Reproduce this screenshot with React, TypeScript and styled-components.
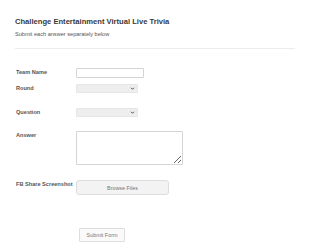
import React from 'react';
import styled, { createGlobalStyle } from 'styled-components';

const GlobalStyle = createGlobalStyle`
	html, body {
		margin: 0;
		padding: 0;
		background: #ffffff;
	}
	body {
		font-family: 'Liberation Sans', Arial, sans-serif;
		color: #333333;
	}
`;

export default function App() {
	return (
		<>
			<GlobalStyle />
			<Page>
				<Header>
					<Title>Challenge Entertainment Virtual Live Trivia</Title>
					<Subtitle>Submit each answer separately below</Subtitle>
				</Header>
				<Form onSubmit={(e) => e.preventDefault()}>
					<Row $top={19}>
						<Label>Team Name</Label>
						<TextInput type="text" />
					</Row>
					<Row $top={6}>
						<Label>Round</Label>
						<SelectWrap>
							<Select defaultValue="">
								<option value="" />
							</Select>
							<Chevron viewBox="0 0 10 10">
								<path d="M2 3.5 L5 6.5 L8 3.5" fill="none" stroke="#444" strokeWidth="1.8" />
							</Chevron>
						</SelectWrap>
					</Row>
					<Row $top={15}>
						<Label>Question</Label>
						<SelectWrap>
							<Select defaultValue="">
								<option value="" />
							</Select>
							<Chevron viewBox="0 0 10 10">
								<path d="M2 3.5 L5 6.5 L8 3.5" fill="none" stroke="#444" strokeWidth="1.8" />
							</Chevron>
						</SelectWrap>
					</Row>
					<Row $top={14}>
						<Label>Answer</Label>
						<TextArea />
					</Row>
					<Row $top={15}>
						<Label>FB Share Screenshot</Label>
						<BrowseButton type="button">Browse Files</BrowseButton>
					</Row>
					<SubmitRow>
						<SubmitButton type="submit">Submit Form</SubmitButton>
					</SubmitRow>
				</Form>
			</Page>
		</>
	);
}

const Page = styled.div`
	padding: 17px 15px 0 15px;
	width: 280px;
`;

const Header = styled.div`
	padding-bottom: 10px;
	border-bottom: 1px solid #ececec;
`;

const Title = styled.h1`
	margin: 0;
	font-size: 7.6px;
	line-height: 10px;
	font-weight: bold;
	color: #3a3a3a;
`;

const Subtitle = styled.p`
	margin: 3px 0 0 0;
	font-size: 5.6px;
	line-height: 8px;
	color: #555555;
`;

const Form = styled.form`
	display: flex;
	flex-direction: column;
	padding-left: 1px;
`;

const Row = styled.div<{ $top: number }>`
	display: flex;
	align-items: flex-start;
	margin-top: ${({ $top }) => $top}px;
`;

const Label = styled.label`
	width: 60px;
	flex-shrink: 0;
	padding-top: 1px;
	font-size: 5.6px;
	line-height: 7px;
	font-weight: bold;
	color: #555555;
	white-space: nowrap;
`;

const TextInput = styled.input`
	box-sizing: border-box;
	width: 68px;
	height: 10px;
	margin: 0;
	padding: 0 2px;
	border: 1px solid #d4d4d4;
	border-radius: 1px;
	background: #ffffff;
	outline: none;
	font-size: 6px;
`;

const SelectWrap = styled.div`
	position: relative;
	width: 62px;
	height: 9px;
	font-size: 0;
	line-height: 0;
`;

const Select = styled.select`
	display: block;
	box-sizing: border-box;
	width: 100%;
	height: 100%;
	margin: 0;
	padding: 0;
	border: 1px solid #e6e6e6;
	border-radius: 1px;
	background: #eeeeee;
	appearance: none;
	outline: none;
	font-size: 5px;
`;

const Chevron = styled.svg`
	position: absolute;
	right: 3px;
	top: 2px;
	width: 5px;
	height: 5px;
	pointer-events: none;
`;

const TextArea = styled.textarea`
	box-sizing: border-box;
	width: 107px;
	height: 34px;
	margin: 0;
	padding: 2px;
	border: 1px solid #d4d4d4;
	border-radius: 1px;
	outline: none;
	font-size: 6px;
	font-family: 'Liberation Sans', Arial, sans-serif;
`;

const BrowseButton = styled.button`
	box-sizing: border-box;
	width: 93px;
	height: 15px;
	margin: 0;
	padding: 0;
	border: 1px solid #dddddd;
	border-radius: 3px;
	background: #f3f3f3;
	color: #777777;
	font-family: 'Liberation Sans', Arial, sans-serif;
	font-size: 5.4px;
	cursor: pointer;
`;

const SubmitRow = styled.div`
	display: flex;
	padding-left: 63px;
	margin-top: 33px;
`;

const SubmitButton = styled.button`
	box-sizing: border-box;
	width: 46px;
	height: 14px;
	margin: 0;
	padding: 0;
	border: 1px solid #dddddd;
	border-radius: 1px;
	background: #fafafa;
	color: #777777;
	font-family: 'Liberation Sans', Arial, sans-serif;
	font-size: 5.4px;
	cursor: pointer;
`;
